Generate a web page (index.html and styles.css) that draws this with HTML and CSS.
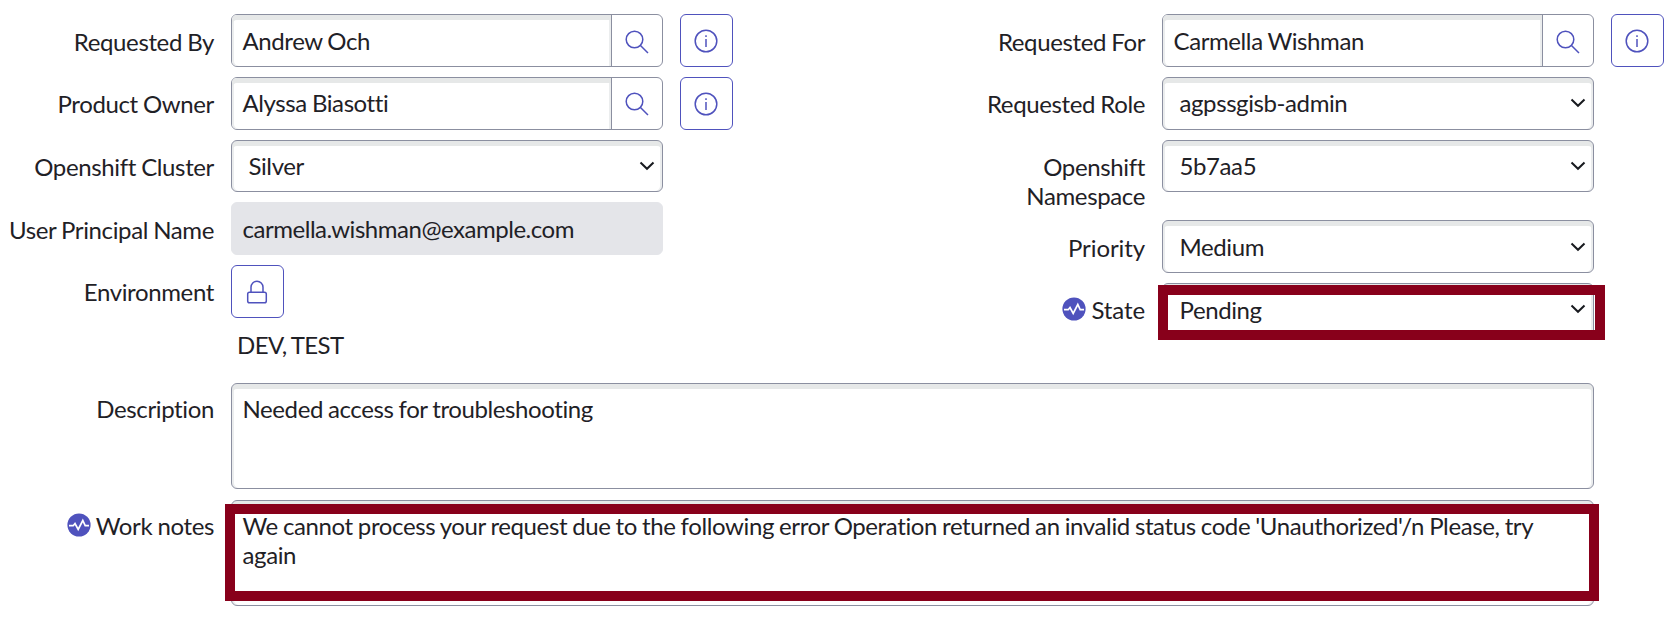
FILE: index.html
```html
<!DOCTYPE html>
<html lang="en">
<head>
<meta charset="utf-8">
<title>Access request</title>
<link rel="stylesheet" href="styles.css">
</head>
<body>
<svg width="0" height="0" class="defs">
  <symbol id="search" viewBox="0 0 24 24"><circle cx="9.5" cy="9.5" r="8.3"/><path d="M15.5 15.5L23 23"/></symbol>
  <symbol id="info" viewBox="0 0 24 24"><circle cx="12" cy="12" r="10.8"/><path d="M12 10V18"/><path d="M12 6.2V8"/></symbol>
  <symbol id="lock" viewBox="0 0 24 24"><rect x="2.7" y="12.2" width="18.6" height="10.6" rx="1.8"/><path d="M6 12V7.2a6 6 0 0 1 12 0V12"/></symbol>
  <symbol id="chevron" viewBox="0 0 16 10"><path d="M1.5 1.5L8 7.8L14.5 1.5"/></symbol>
  <symbol id="activity" viewBox="0 0 24 24"><circle cx="12" cy="12" r="11.6"/><path d="M2 12.7H6.2L8 10.5L11.2 16.5L15.8 7.5L18.2 12.7H22"/></symbol>
</svg>
<main class="form">
  <div class="columns">
    <section class="column">
      <div class="row">
        <label class="label">Requested By</label>
        <div class="field lookup"><span class="value">Andrew Och</span><span class="search"><svg class="icon"><use href="#search"/></svg></span></div>
        <button class="button"><svg class="icon"><use href="#info"/></svg></button>
      </div>
      <div class="row raised">
        <label class="label">Product Owner</label>
        <div class="field lookup"><span class="value">Alyssa Biasotti</span><span class="search"><svg class="icon"><use href="#search"/></svg></span></div>
        <button class="button"><svg class="icon"><use href="#info"/></svg></button>
      </div>
      <div class="row raised">
        <label class="label">Openshift Cluster</label>
        <div class="field select short"><span>Silver</span><svg class="chevron"><use href="#chevron"/></svg></div>
      </div>
      <div class="row">
        <label class="label">User Principal Name</label>
        <div class="field readonly">carmella.wishman@example.com</div>
      </div>
      <div class="row raised">
        <label class="label">Environment</label>
        <div class="environment">
          <button class="button"><svg class="icon"><use href="#lock"/></svg></button>
          <p class="list">DEV, TEST</p>
        </div>
      </div>
    </section>
    <section class="column">
      <div class="row">
        <label class="label">Requested For</label>
        <div class="field lookup"><span class="value">Carmella Wishman</span><span class="search"><svg class="icon"><use href="#search"/></svg></span></div>
        <button class="button"><svg class="icon"><use href="#info"/></svg></button>
      </div>
      <div class="row raised">
        <label class="label">Requested Role</label>
        <div class="field select"><span>agpssgisb-admin</span><svg class="chevron"><use href="#chevron"/></svg></div>
      </div>
      <div class="row tall raised">
        <label class="label">Openshift Namespace</label>
        <div class="field select short"><span>5b7aa5</span><svg class="chevron"><use href="#chevron"/></svg></div>
      </div>
      <div class="row">
        <label class="label loose">Priority</label>
        <div class="field select"><span>Medium</span><svg class="chevron"><use href="#chevron"/></svg></div>
      </div>
      <div class="row raised">
        <label class="label loose"><svg class="activity"><use href="#activity"/></svg>State</label>
        <div class="field select marked"><span>Pending</span><svg class="chevron"><use href="#chevron"/></svg><i class="highlight state"></i></div>
      </div>
    </section>
  </div>
  <div class="row wide">
    <label class="label">Description</label>
    <div class="field area">Needed access for troubleshooting</div>
  </div>
  <div class="row wide">
    <label class="label"><svg class="activity"><use href="#activity"/></svg>Work notes</label>
    <div class="field area marked">We cannot process your request due to the following error Operation returned an invalid status code 'Unauthorized'/n Please, try again<i class="highlight notes"></i></div>
  </div>
</main>
</body>
</html>
```
FILE: styles.css
```css
* { box-sizing: border-box; }
body {
  margin: 0;
  background: #fff;
  color: #1f2126;
  font: 24px/29px Lato, sans-serif;
  font-variant-ligatures: none;
  letter-spacing: -0.4px;
  word-spacing: -0.7px;
}
.defs { position: absolute; }
.form { height: 625px; padding-top: 14px; overflow: hidden; }
.columns { display: flex; height: 369px; }
.column { width: 931px; flex: none; }
.row { display: flex; align-items: flex-start; height: 63px; }
.row:nth-child(3) { height: 62px; }
.row.tall { height: 80px; }
.label {
  width: 214px;
  margin-right: 17px;
  padding-top: 13px;
  flex: none;
  text-align: right;
  letter-spacing: -0.37px;
  word-spacing: -0.6px;
}
.label.loose { letter-spacing: -0.1px; }
.raised .label { padding-top: 12px; }
.column + .column .label { padding-left: 50px; }
.field {
  width: 432px;
  height: 53px;
  flex: none;
  border: 1px solid #8b8fa0;
  border-radius: 6px;
  padding: 11px 11px 0 10.5px;
  box-shadow: inset 0 5px 0 #e6e8e8, inset 2px 0 0 #ebedee, inset -2px 0 0 #ebedee;
}
.short { height: 52px; }
.lookup { display: flex; padding: 0; box-shadow: none; }
.value {
  width: 379px;
  padding: 11px 11px 0 10.5px;
  border-radius: 5px 0 0 5px;
  box-shadow: inset 0 5px 0 #e6e8e8, inset 2px 0 0 #ebedee, inset -2px 0 0 #ebedee;
}
.raised .value { padding-top: 10px; }
.search {
  width: 51px;
  padding: 15px 0 0 13px;
  border-left: 1px solid #8b8fa0;
}
.raised .search { padding-top: 14px; }
.button {
  display: block;
  width: 53px;
  height: 53px;
  padding: 0 0 0 13px;
  border: 1px solid #4f52bd;
  border-radius: 6px;
  background: #fff;
}
.row > .button { margin-left: 17px; }
.icon {
  display: block;
  width: 24px;
  height: 24px;
  fill: none;
  stroke: #4f52bd;
  stroke-width: 1.5;
}
.select { position: relative; display: flex; justify-content: space-between; padding: 11px 7px 0 16.5px; }
.raised .select { padding-top: 10px; }
.raised .select.marked { padding-top: 11px; }
.chevron {
  width: 16px;
  height: 10px;
  margin-top: 10px;
  fill: none;
  stroke: #181a1f;
  stroke-width: 2;
}
.marked .chevron { margin-top: 9px; }
.readonly { border-color: #e4e5e9; background: #e4e5e9; box-shadow: none; letter-spacing: -0.47px; }
.list { margin: 12px 0 0 6px; letter-spacing: -0.6px; }
.wide { height: 117px; }
.area { width: 1363px; height: 106px; padding: 10px 25px 0 10.5px; }
.area.marked { letter-spacing: -0.385px; }
.wide .label { padding-top: 11px; }
.marked { position: relative; }
.highlight { position: absolute; border: 10px solid #88001b; }
.state { left: -5px; top: 1px; width: 447px; height: 55px; }
.notes { left: -7px; top: 3px; width: 1374px; height: 97px; }
.activity {
  width: 24px;
  height: 24px;
  margin-right: 5px;
  vertical-align: -2px;
  fill: #4f52bd;
}
#activity path { fill: none; stroke: #fff; stroke-width: 1.7; }
```
